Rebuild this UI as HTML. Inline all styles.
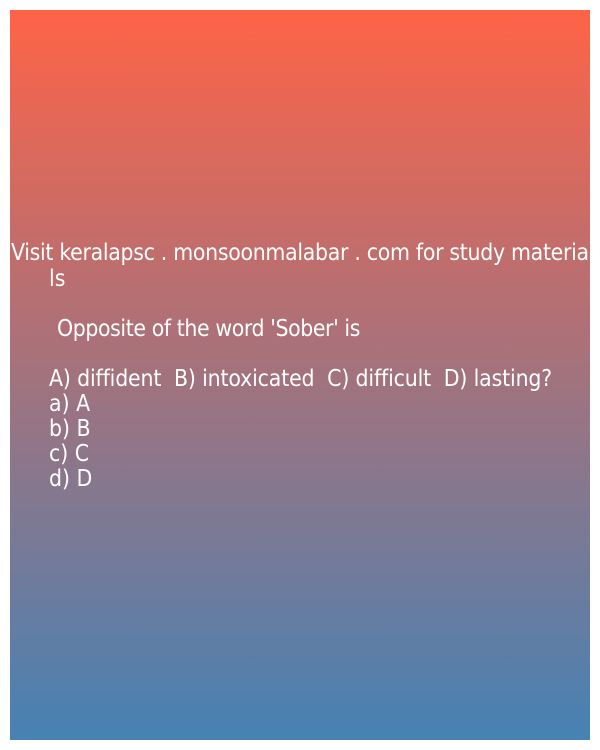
<html><head><style>
body{margin:0;width:600px;height:750px;background:#fff;position:relative;overflow:hidden}
#b{position:absolute;left:10px;top:10px;width:580px;height:730px;background:linear-gradient(#ff6347,#4682b4)}
.t{position:absolute;color:#fff;font-family:"DejaVu Sans Condensed","DejaVu Sans",sans-serif;font-size:22.8px;line-height:25px;white-space:pre;transform-origin:0 0}
</style></head><body><div id="b"></div>
<div class="t" style="left:11px;top:241px;letter-spacing:-0.3px">Visit keralapsc . monsoonmalabar . com for study materia</div>
<div class="t" style="left:49px;top:267px">ls</div>
<div class="t" style="left:57px;top:317px;letter-spacing:-0.4px">Opposite of the word 'Sober' is</div>
<div class="t" style="left:49px;top:367px;letter-spacing:-0.15px">A) diffident  B) intoxicated  C) difficult  D) lasting?</div>
<div class="t" style="left:49px;top:392px">a) A</div>
<div class="t" style="left:49px;top:417px">b) B</div>
<div class="t" style="left:49px;top:442px">c) C</div>
<div class="t" style="left:49px;top:467px">d) D</div>
</body></html>
